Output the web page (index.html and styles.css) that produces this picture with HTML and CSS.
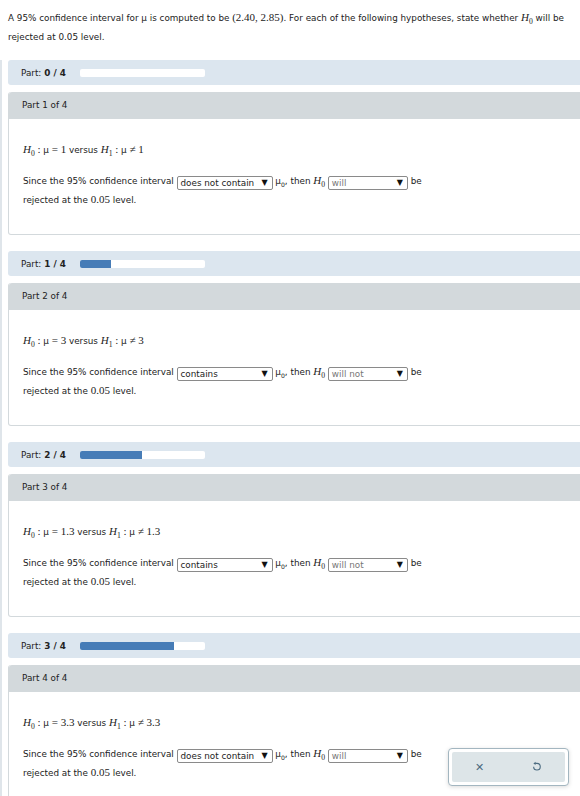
FILE: index.html
```html
<!DOCTYPE html>
<html lang="en">
<head>
    <meta charset="UTF-8">
    <title>Confidence Interval Hypotheses</title>
    <link rel="stylesheet" href="styles.css">
</head>
<body>

    <p class="intro">
        A 95% confidence interval for <span class="mu">μ</span> is computed to be <span class="math">(2.40, 2.85)</span>. For each of the following hypotheses, state whether <span class="math"><i>H</i><sub>0</sub></span> will be rejected at 0.05 level.
    </p>

    <div class="parts">

        <div class="progress">
            Part: <b>0 / 4</b>
            <span class="track"><span class="fill" style="width: 0%;"></span></span>
        </div>
        <div class="card">
            <div class="card-header">Part 1 of 4</div>
            <div class="card-body">
                <div class="hyp"><i>H</i><sub>0</sub> : <span class="mu">μ</span> = 1 <span class="word">versus</span> <i>H</i><sub>1</sub> : <span class="mu">μ</span> ≠ 1</div>
                <div class="prompt">
                    Since the 95% confidence interval <span class="select dark">does not contain<span class="arrow">▼</span></span> <span class="mu">μ</span><sub>0</sub>, then <span class="math"><i>H</i><sub>0</sub></span> <span class="select small">will<span class="arrow">▼</span></span> be rejected at the <span class="num">0.05</span> level.
                </div>
            </div>
        </div>

        <div class="progress">
            Part: <b>1 / 4</b>
            <span class="track"><span class="fill" style="width: 25%;"></span></span>
        </div>
        <div class="card">
            <div class="card-header">Part 2 of 4</div>
            <div class="card-body">
                <div class="hyp"><i>H</i><sub>0</sub> : <span class="mu">μ</span> = 3 <span class="word">versus</span> <i>H</i><sub>1</sub> : <span class="mu">μ</span> ≠ 3</div>
                <div class="prompt">
                    Since the 95% confidence interval <span class="select dark">contains<span class="arrow">▼</span></span> <span class="mu">μ</span><sub>0</sub>, then <span class="math"><i>H</i><sub>0</sub></span> <span class="select small">will not<span class="arrow">▼</span></span> be rejected at the <span class="num">0.05</span> level.
                </div>
            </div>
        </div>

        <div class="progress">
            Part: <b>2 / 4</b>
            <span class="track"><span class="fill" style="width: 50%;"></span></span>
        </div>
        <div class="card">
            <div class="card-header">Part 3 of 4</div>
            <div class="card-body">
                <div class="hyp"><i>H</i><sub>0</sub> : <span class="mu">μ</span> = 1.3 <span class="word">versus</span> <i>H</i><sub>1</sub> : <span class="mu">μ</span> ≠ 1.3</div>
                <div class="prompt">
                    Since the 95% confidence interval <span class="select dark">contains<span class="arrow">▼</span></span> <span class="mu">μ</span><sub>0</sub>, then <span class="math"><i>H</i><sub>0</sub></span> <span class="select small">will not<span class="arrow">▼</span></span> be rejected at the <span class="num">0.05</span> level.
                </div>
            </div>
        </div>

        <div class="progress">
            Part: <b>3 / 4</b>
            <span class="track"><span class="fill" style="width: 75%;"></span></span>
        </div>
        <div class="card">
            <div class="card-header">Part 4 of 4</div>
            <div class="card-body">
                <div class="hyp"><i>H</i><sub>0</sub> : <span class="mu">μ</span> = 3.3 <span class="word">versus</span> <i>H</i><sub>1</sub> : <span class="mu">μ</span> ≠ 3.3</div>
                <div class="prompt">
                    Since the 95% confidence interval <span class="select dark">does not contain<span class="arrow">▼</span></span> <span class="mu">μ</span><sub>0</sub>, then <span class="math"><i>H</i><sub>0</sub></span> <span class="select small">will<span class="arrow">▼</span></span> be rejected at the <span class="num">0.05</span> level.
                </div>
            </div>
        </div>

    </div>

    <div class="answer-tools">
        <div class="tools-inner">
            <button type="button" class="tool-btn">✕</button>
            <button type="button" class="tool-btn">
                <svg width="11" height="11" viewBox="0 0 12 12">
                    <path d="M4.5 2.6 H6.5 A3.6 3.6 0 1 1 2.9 6.2" fill="none" stroke="#4b6b80" stroke-width="1.2"/>
                    <path d="M2.6 2.6 L5 0.8 L5 4.4 Z" fill="#4b6b80"/>
                </svg>
            </button>
        </div>
    </div>

</body>
</html>
```

FILE: styles.css
```css
html,
body {
    overflow-x: hidden;
}

body {
    font-family: "DejaVu Sans", Verdana, sans-serif;
    font-size: 8.8px;
    color: #222;
    margin: 0;
    padding: 0;
    background-color: #ffffff;
}

.intro {
    margin: 0;
    padding: 8px 4px 0 8px;
    line-height: 19px;
}

.math,
.num,
.hyp {
    font-family: "Liberation Serif", "Times New Roman", serif;
}

.math,
.num {
    font-size: 11px;
}

.mu {
    font-family: "DejaVu Sans", sans-serif;
}

sub {
    font-size: 70%;
    vertical-align: -3px;
    line-height: 1;
}

.parts {
    margin-top: 13px;
    border-left: 2px solid #dfe5ea;
    padding-left: 6px;
}

.progress {
    background-color: #dce6ef;
    height: 25px;
    border-radius: 3px 0 0 3px;
    margin-right: -10px;
    display: flex;
    align-items: center;
    padding-left: 13px;
    color: #222;
}

.progress b {
    margin-left: 3px;
}

.track {
    display: inline-block;
    width: 125px;
    height: 8px;
    background-color: #ffffff;
    border-radius: 2px;
    margin-left: 14px;
    overflow: hidden;
}

.fill {
    display: block;
    height: 100%;
    background-color: #467cb7;
}

.card {
    margin-top: 7px;
    margin-bottom: 16px;
    margin-right: -10px;
    border: 1px solid #d3d9dc;
    border-top: none;
    border-radius: 3px;
}

.card-header {
    background-color: #d3d9dc;
    height: 27px;
    line-height: 27px;
    padding-left: 13px;
    border-radius: 3px 0 0 0;
}

.card-body {
    height: 115px;
    padding: 21px 0 0 14px;
    box-sizing: border-box;
}

.hyp {
    font-size: 11px;
    line-height: 18px;
}

.hyp .word,
.hyp .mu {
    font-family: "DejaVu Sans", sans-serif;
    font-size: 8.8px;
}

.prompt {
    margin-top: 12px;
    width: 410px;
    line-height: 18px;
}

.select {
    display: inline-block;
    box-sizing: border-box;
    height: 14px;
    line-height: 12px;
    border: 1px solid #8a8a8a;
    border-radius: 2px;
    padding: 0 3px;
    position: relative;
    vertical-align: -2px;
    width: 96px;
    color: #222;
}

.select.small {
    width: 80px;
    color: #777;
}

.arrow {
    position: absolute;
    right: 4px;
    top: 0;
    color: #111;
    font-size: 8px;
}

.answer-tools {
    position: fixed;
    right: 11px;
    bottom: 10px;
    width: 121px;
    height: 38px;
    box-sizing: border-box;
    border: 1px solid #a3b6c0;
    border-radius: 4px;
    padding: 3px;
    background-color: #ffffff;
    box-shadow: 0 1px 4px rgba(0, 0, 0, 0.15);
}

.tools-inner {
    background-color: #dde5e8;
    border-radius: 2px;
    height: 100%;
    display: flex;
    justify-content: space-around;
    align-items: center;
}

.tool-btn {
    border: none;
    background: none;
    color: #4b6b80;
    font-size: 11px;
    padding: 0;
    cursor: pointer;
}
```
